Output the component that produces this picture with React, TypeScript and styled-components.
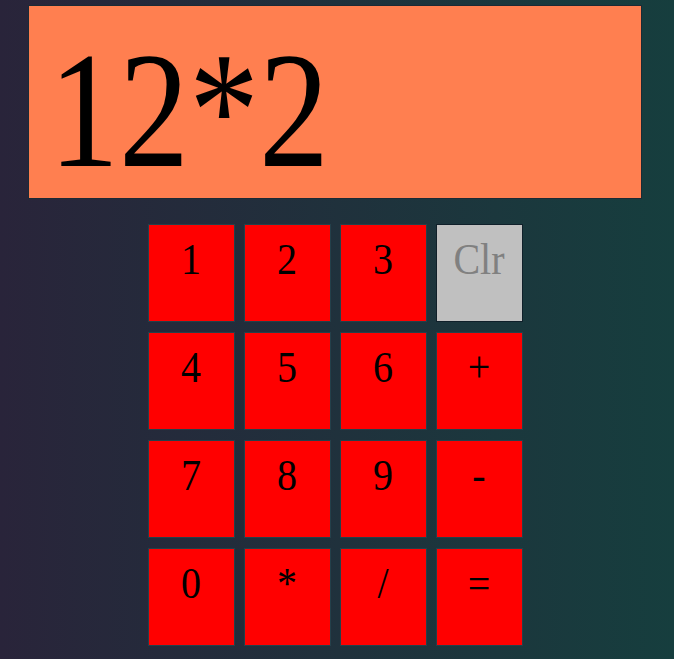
import React from "react";
import styled, { createGlobalStyle } from "styled-components";

const Global = createGlobalStyle`
  html, body { margin: 0; padding: 0; }
  body {
    min-height: 659px;
    background: linear-gradient(to right, #29243a, #163e3e);
    font-family: "Liberation Serif", "Times New Roman", serif;
  }
`;

const Page = styled.div`
  display: flex;
  flex-direction: column;
  align-items: center;
  padding-top: 5px;
  padding-left: 28px;
  padding-right: 32px;
  gap: 25px;
`;

const Display = styled.div`
  box-sizing: border-box;
  align-self: stretch;
  height: 194px;
  background: #ff7f50;
  border: 1px solid #1c2a35;
  display: flex;
  align-items: flex-start;
  padding: 43px 0 0 20px;
`;

const DisplayText = styled.span`
  font-size: 140px;
  line-height: 1;
  color: #000;
  display: inline-block;
  transform: scaleY(1.18);
  transform-origin: left 117px;
`;

const Pad = styled.div`
  display: grid;
  grid-template-columns: repeat(4, 87px);
  grid-auto-rows: 98px;
  column-gap: 9px;
  row-gap: 10px;
`;

const Key = styled.button<{ $clear?: boolean }>`
  box-sizing: border-box;
  margin: 0;
  border: 1px solid ${(p) => (p.$clear ? "#10202a" : "#24404a")};
  background: ${(p) => (p.$clear ? "#c0c0c0" : "#ff0000")};
  color: ${(p) => (p.$clear ? "#808080" : "#000")};
  font-family: "Liberation Serif", "Times New Roman", serif;
  font-size: 40px;
  padding: 13px 0 0;
  display: flex;
  justify-content: center;
  align-items: flex-start;
  cursor: pointer;
`;

const KeyLabel = styled.span`
  display: inline-block;
  line-height: 46px;
  transform: scaleY(1.1);
  transform-origin: center 36px;
`;

const keys = ["1", "2", "3", "Clr", "4", "5", "6", "+", "7", "8", "9", "-", "0", "*", "/", "="];

export default function App() {
  return (
    <>
      <Global />
      <Page>
        <Display>
          <DisplayText>12*2</DisplayText>
        </Display>
        <Pad>
          {keys.map((k) => (
            <Key key={k} $clear={k === "Clr"}>
              <KeyLabel>{k}</KeyLabel>
            </Key>
          ))}
        </Pad>
      </Page>
    </>
  );
}
